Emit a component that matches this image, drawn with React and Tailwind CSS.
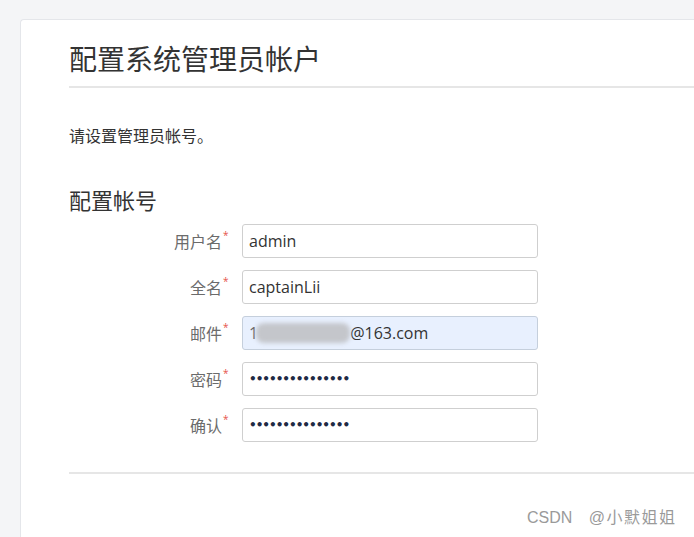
import React from "react";

const cjk = { fontFamily: '"Noto Sans CJK SC", "Noto Sans", sans-serif' };
const latin = { fontFamily: '"Open Sans", "Noto Sans CJK SC", sans-serif' };

function Label({ text }) {
  return (
    <div className="w-[161px] shrink-0 flex justify-end items-center">
      <span className="text-[16px] leading-[20px] text-[#6b6b6b]" style={cjk}>{text}</span>
      <span className="self-start -mt-[1px] ml-[1px] text-[10px] leading-[10px] text-[#e5534b] w-[7px]" style={latin}>*</span>
    </div>
  );
}

function Field({ children, blue }) {
  return (
    <div
      className={
        "w-[296px] h-[34px] rounded-[3px] border flex items-center px-[6px] text-[16px] text-[#333] " +
        (blue ? "bg-[#e8f0fe] border-[#c5cfdc]" : "bg-white border-[#cfcfcf]")
      }
      style={latin}
    >
      {children}
    </div>
  );
}

function Row({ label, children, blue }) {
  return (
    <div className="flex items-center gap-[12px] h-[34px]">
      <Label text={label} />
      <Field blue={blue}>{children}</Field>
    </div>
  );
}

function Dots() {
  return (
    <span className="text-[#1f2a44] text-[12px] tracking-[-1px] font-bold" style={{ fontFamily: '"DejaVu Sans", sans-serif' }}>
      •••••••••••••••
    </span>
  );
}

export default function App() {
  return (
    <div className="relative w-[694px] h-[537px] overflow-hidden bg-[#f4f5f7]">
      <div className="ml-[20px] mt-[19px] h-[520px] bg-white border-l border-t border-[#e4e6ea] rounded-tl-[4px] pl-[48px] flex flex-col">
        <div className="pt-[20px] pb-[10px] border-b-2 border-[#e6e6e6]">
          <h1 className="text-[28px] leading-[36px] text-[#333] font-normal" style={cjk}>配置系统管理员帐户</h1>
        </div>
        <p className="mt-[36px] text-[16px] leading-[22px] text-[#333]" style={cjk}>请设置管理员帐号。</p>
        <h2 className="mt-[38px] text-[22px] leading-[30px] text-[#333] font-normal" style={cjk}>配置帐号</h2>
        <div className="mt-[10px] flex flex-col gap-[12px]">
          <Row label="用户名">admin</Row>
          <Row label="全名">captainLii</Row>
          <Row label="邮件" blue>
            <span className="text-[#666]">1</span>
            <span className="inline-block w-[94px] h-[20px] rounded-[8px] bg-[#c4c6cb] blur-[2px] -ml-[2px]" />
            <span>@163.com</span>
          </Row>
          <Row label="密码"><Dots /></Row>
          <Row label="确认"><Dots /></Row>
        </div>
        <div className="mt-[30px] border-t-2 border-[#e6e6e6]" />
      </div>
      <div
        className="absolute left-[527px] top-[507px] text-[16px] leading-[22px] text-[#9a9a9a]"
        style={{ fontFamily: '"Liberation Sans", "Noto Sans CJK SC", sans-serif' }}
      >
        CSDN <span className="ml-[12px] tracking-[1.5px]">@小默姐姐</span>
      </div>
    </div>
  );
}
